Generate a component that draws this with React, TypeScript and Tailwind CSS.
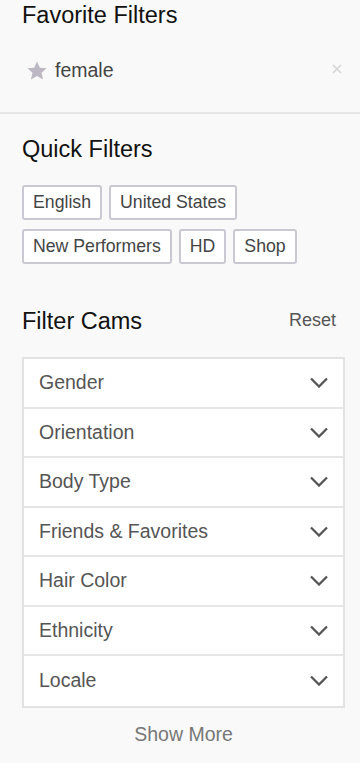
const quick = [["English", "United States"], ["New Performers", "HD", "Shop"]];
const filters = ["Gender", "Orientation", "Body Type", "Friends & Favorites", "Hair Color", "Ethnicity", "Locale"];

export default function App() {
  return (
    <div className="min-h-[763px] w-[360px] bg-[#f9f9f9] font-['Liberation_Sans',Arial,sans-serif]">
      <div className="px-[22px] pt-[2px]">
        <h2 className="text-[23.5px] leading-[26px] text-[#111]">Favorite Filters</h2>
        <div className="mt-[30px] flex items-center h-[26px]">
          <svg viewBox="0 0 24 24" className="ml-[4px] w-[22px] h-[22px] fill-[#bdb8c4]">
            <path d="M12 1.5l3.1 7 7.4.6-5.6 4.9 1.7 7.4L12 17.5l-6.6 3.9 1.7-7.4L1.5 9.1l7.4-.6z" />
          </svg>
          <span className="ml-[7px] text-[19.5px] text-[#444]">female</span>
          <svg viewBox="0 0 10 10" className="ml-auto mr-[-4px] mb-[4px] w-[10px] h-[10px] stroke-[#d4d4d4]" strokeWidth={1.6}>
            <path d="M1 1l8 8M9 1l-8 8" />
          </svg>
        </div>
      </div>
      <div className="mt-[28px] h-[2px] bg-[#e6e6e6]" />
      <div className="px-[22px] pt-[22px]">
        <h2 className="text-[23.5px] leading-[26px] text-[#111]">Quick Filters</h2>
        <div className="mt-[23px] flex flex-col gap-[9px]">
          {quick.map((row, i) => (
            <div key={i} className="flex gap-[7px]">
              {row.map((q) => (
                <span key={q} className="h-[35px] px-[9px] flex items-center border-2 border-[#cac8d2] rounded-[3px] bg-white text-[17.7px] text-[#444]">
                  {q}
                </span>
              ))}
            </div>
          ))}
        </div>
      </div>
      <div className="pl-[22px] pr-[15px] pt-[43px]">
        <div className="flex items-center justify-between">
          <h2 className="text-[23.5px] leading-[26px] text-[#111]">Filter Cams</h2>
          <span className="mr-[9px] text-[18px] text-[#555]">Reset</span>
        </div>
        <div className="mt-[23px] border-2 border-[#e2e2e2] bg-white divide-y-2 divide-[#e6e6e6]">
          {filters.map((f) => (
            <div key={f} className="h-[49.5px] flex items-center justify-between pl-[15px] pr-[15px]">
              <span className="text-[19.5px] text-[#555]">{f}</span>
              <svg viewBox="0 0 18 11" className="w-[18px] h-[11px] stroke-[#555] fill-none" strokeWidth={2.3}>
                <path d="M1 1.5l8 8 8-8" />
              </svg>
            </div>
          ))}
        </div>
        <div className="mt-[12px] text-center text-[19.5px] text-[#777]">Show More</div>
      </div>
    </div>
  );
}
